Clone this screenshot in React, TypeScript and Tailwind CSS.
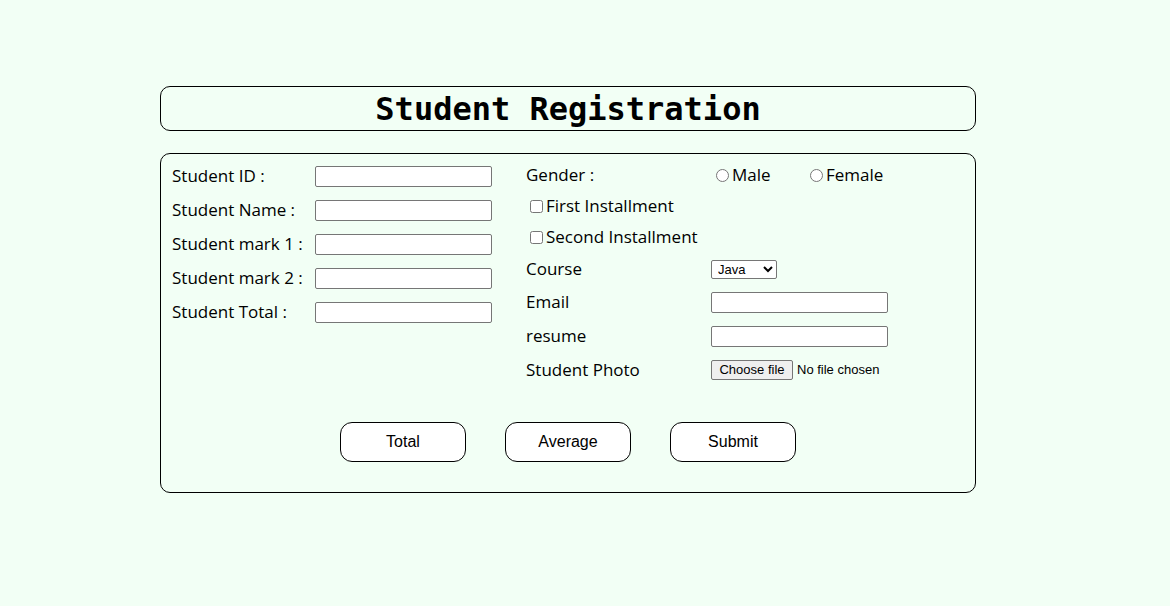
export default function App() {
  const leftFields = ['Student ID :', 'Student Name :', 'Student mark 1 :', 'Student mark 2 :', 'Student Total :'];

  return (
    <div className="min-h-[606px] w-full bg-[#f2fff5] pt-[86px] font-['Open_Sans',sans-serif] text-[17px] text-black">
      {/* Title */}
      <div className="ml-[160px] flex h-[45px] w-[816px] items-center justify-center rounded-[10px] border border-black">
        <h1 className="font-['DejaVu_Sans_Mono',monospace] text-[32px] leading-none font-bold">Student Registration</h1>
      </div>

      {/* Form */}
      <form className="mt-[22px] ml-[160px] w-[816px] rounded-[10px] border border-black px-[11px] pt-[5px] pb-[30px]">
        <div className="flex">
          {/* Left column */}
          <div className="flex w-[354px] flex-col">
            {leftFields.map((label) => (
              <div key={label} className="flex h-[34px] items-center">
                <label className="w-[143px]">{label}</label>
                <input
                  type="text"
                  className="h-[21px] w-[177px] rounded-[2px] border border-[#767676] bg-white px-[2px] text-[13px]"
                />
              </div>
            ))}
          </div>

          {/* Right column */}
          <div className="flex flex-col">
            <div className="flex h-[32px] items-center">
              <span className="w-[185px]">Gender :</span>
              <label className="flex w-[94px] items-center">
                <input type="radio" name="gender" className="mr-[3px] ml-[5px] h-[13px] w-[13px]" />
                Male
              </label>
              <label className="flex items-center">
                <input type="radio" name="gender" className="mr-[3px] ml-[5px] h-[13px] w-[13px]" />
                Female
              </label>
            </div>
            <label className="flex h-[30px] items-center">
              <input type="checkbox" className="mr-[3px] ml-[4px] h-[13px] w-[13px]" />
              First Installment
            </label>
            <label className="flex h-[32px] items-center">
              <input type="checkbox" className="mr-[3px] ml-[4px] h-[13px] w-[13px]" />
              Second Installment
            </label>
            <div className="flex h-[32px] items-center">
              <span className="w-[185px]">Course</span>
              <select className="h-[19px] w-[66px] rounded-[2px] border border-[#767676] bg-white pl-[2px] font-['Liberation_Sans',sans-serif] text-[13px]">
                <option>Java</option>
                <option>Python</option>
                <option>C++</option>
              </select>
            </div>
            <div className="flex h-[34px] items-center">
              <span className="w-[185px]">Email</span>
              <input
                type="email"
                className="h-[21px] w-[177px] rounded-[2px] border border-[#767676] bg-white px-[2px] text-[13px]"
              />
            </div>
            <div className="flex h-[34px] items-center">
              <span className="w-[185px]">resume</span>
              <input
                type="text"
                className="h-[21px] w-[177px] rounded-[2px] border border-[#767676] bg-white px-[2px] text-[13px]"
              />
            </div>
            <div className="flex h-[34px] items-center">
              <span className="w-[185px]">Student Photo</span>
              <label className="flex items-center font-['Liberation_Sans',sans-serif] text-[13px]">
                <span className="flex h-[20px] w-[82px] items-center justify-center rounded-[2px] border border-[#767676] bg-[#efefef]">
                  Choose file
                </span>
                <span className="ml-[4px]">No file chosen</span>
                <input type="file" className="hidden" />
              </label>
            </div>
          </div>
        </div>

        {/* Buttons */}
        <div className="mt-[35px] flex justify-center gap-[39px] font-['Liberation_Sans',sans-serif]">
          {['Total', 'Average', 'Submit'].map((b) => (
            <button
              key={b}
              type="button"
              className="h-[40px] w-[126px] rounded-[12px] border border-black bg-white text-[16px]"
            >
              {b}
            </button>
          ))}
        </div>
      </form>
    </div>
  );
}
